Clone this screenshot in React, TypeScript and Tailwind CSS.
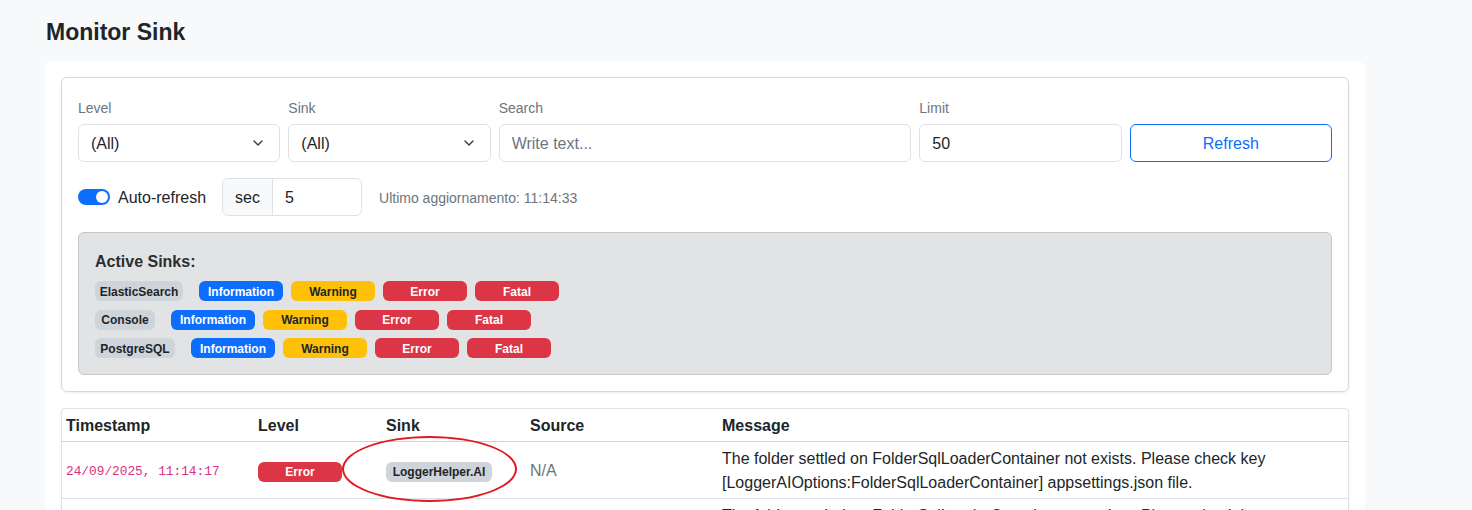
import { ChevronDown } from 'lucide-react'

type Level = 'Information' | 'Warning' | 'Error' | 'Fatal'

const levelClass: Record<Level, string> = {
  Information: 'bg-[#0d6efd] text-white',
  Warning: 'bg-[#ffc107] text-[#212529]',
  Error: 'bg-[#dc3545] text-white',
  Fatal: 'bg-[#dc3545] text-white',
}

const sinks = [
  { name: 'ElasticSearch', width: 'w-[88px]' },
  { name: 'Console', width: 'w-[60px]' },
  { name: 'PostgreSQL', width: 'w-[80px]' },
]

const levels: Level[] = ['Information', 'Warning', 'Error', 'Fatal']

const message =
  'The folder settled on FolderSqlLoaderContainer not exists. Please check key [LoggerAIOptions:FolderSqlLoaderContainer] appsettings.json file.'

function Badge({ children, className }: { children: string; className: string }) {
  return (
    <span
      className={`inline-flex h-5 items-center justify-center rounded-md pt-[1px] text-[12px] font-bold leading-none ${className}`}
    >
      {children}
    </span>
  )
}

function SelectBox({ label }: { label: string }) {
  return (
    <div className="col-span-2">
      <div className="mb-[6px] h-[22px] text-[14px] leading-[24px] text-[#6c757d]">{label}</div>
      <div className="relative">
        <select className="h-[38px] w-full appearance-none rounded-md border border-[#dee2e6] bg-white px-3 pt-[2px] text-[16px] text-[#212529] outline-none">
          <option>(All)</option>
        </select>
        <ChevronDown className="pointer-events-none absolute top-1/2 right-[14px] h-4 w-4 -translate-y-1/2 text-[#343a40]" strokeWidth={2} />
      </div>
    </div>
  )
}

function LogRow() {
  return (
    <tr className="border-b border-[#dee2e6]">
      <td className="px-1 pt-[6px] pb-[2px] align-middle font-['Liberation_Mono',monospace] text-[12.8px] text-[#d63384]">
        24/09/2025, 11:14:17
      </td>
      <td className="px-1 pt-[5px] pb-[3px] align-middle">
        <Badge className={`w-[84px] ${levelClass.Error}`}>Error</Badge>
      </td>
      <td className="px-1 pt-[5px] pb-[3px] align-middle">
        <Badge className="w-[106px] bg-[#ced4da] text-[#212529]">LoggerHelper.AI</Badge>
      </td>
      <td className="px-1 pt-[5px] pb-[3px] align-middle text-[16px] text-[#6c757d]">N/A</td>
      <td className="px-1 pt-[5px] pb-[3px] align-middle text-[16px] leading-6">{message}</td>
    </tr>
  )
}

export default function App() {
  return (
    <div className="min-h-screen bg-[#f8f9fa] font-['Liberation_Sans',Arial,sans-serif] text-[#212529]">
      <h4 className="pt-[18px] pl-[46px] text-[23px] leading-[29px] font-bold">Monitor Sink</h4>

      <div className="mt-[14px] ml-[45px] w-[1320px] rounded-lg bg-white p-4">
        <div className="rounded-md border border-[#d6d8db] px-4 pt-[18px] pb-4 shadow-[0_1px_3px_rgba(0,0,0,0.08)]">
          <div className="grid grid-cols-12 gap-2">
            <SelectBox label="Level" />
            <SelectBox label="Sink" />
            <div className="col-span-4">
              <div className="mb-[6px] h-[22px] text-[14px] leading-[24px] text-[#6c757d]">Search</div>
              <input
                placeholder="Write text..."
                className="h-[38px] w-full rounded-md border border-[#dee2e6] px-3 pt-[2px] text-[16px] outline-none placeholder:text-[#6c757d]"
              />
            </div>
            <div className="col-span-2">
              <div className="mb-[6px] h-[22px] text-[14px] leading-[24px] text-[#6c757d]">Limit</div>
              <input
                defaultValue="50"
                className="h-[38px] w-full rounded-md border border-[#dee2e6] px-3 pt-[2px] text-[16px] outline-none"
              />
            </div>
            <div className="col-span-2 flex items-end">
              <button className="h-[38px] w-full rounded-md border border-[#0d6efd] pt-[2px] text-[16px] text-[#0d6efd]">
                Refresh
              </button>
            </div>
          </div>

          <div className="mt-4 flex h-[38px] items-center">
            <span className="flex h-4 w-8 items-center justify-end rounded-full bg-[#0d6efd] px-[2px]">
              <span className="h-3 w-3 rounded-full bg-white" />
            </span>
            <span className="ml-2 pt-[1px] text-[16px]">Auto-refresh</span>
            <div className="ml-4 flex h-[38px] w-[140px] rounded-md border border-[#dee2e6]">
              <span className="flex items-center rounded-l-md border-r border-[#dee2e6] bg-[#f8f9fa] px-3 pt-[2px] text-[16px]">
                sec
              </span>
              <input defaultValue="5" className="w-full min-w-0 rounded-r-md px-3 pt-[2px] text-[16px] outline-none" />
            </div>
            <span className="ml-[17px] pt-[2px] text-[14px] text-[#6c757d]">Ultimo aggiornamento: 11:14:33</span>
          </div>

          <div className="mt-4 rounded-md border border-[#c4c8cb] bg-[#e2e3e5] p-4">
            <div className="h-6 pt-[1px] text-[16px] leading-6 font-bold text-[#2b2f32]">Active Sinks:</div>
            <div className="mt-2 flex flex-col gap-[8.5px]">
              {sinks.map((sink) => (
                <div key={sink.name} className="flex h-5 items-center gap-2">
                  <Badge className={`mr-2 ${sink.width} bg-[#ced4da] text-[#212529]`}>{sink.name}</Badge>
                  {levels.map((level) => (
                    <Badge key={level} className={`w-[84px] ${levelClass[level]}`}>
                      {level}
                    </Badge>
                  ))}
                </div>
              ))}
            </div>
          </div>
        </div>

        <div className="relative mt-4 overflow-hidden rounded-t-sm border border-[#dee2e6] shadow-[0_1px_3px_rgba(0,0,0,0.06)]">
          <table className="w-full table-fixed border-collapse text-left">
            <colgroup>
              <col className="w-[192px]" />
              <col className="w-[128px]" />
              <col className="w-[144px]" />
              <col className="w-[192px]" />
              <col />
            </colgroup>
            <thead>
              <tr className="border-b border-[#cfd2d5]">
                <th className="px-1 pt-[5px] pb-[3px] text-[16px] leading-6 font-bold">Timestamp</th>
                <th className="px-1 pt-[5px] pb-[3px] text-[16px] leading-6 font-bold">Level</th>
                <th className="px-1 pt-[5px] pb-[3px] text-[16px] leading-6 font-bold">Sink</th>
                <th className="px-1 pt-[5px] pb-[3px] text-[16px] leading-6 font-bold">Source</th>
                <th className="px-1 pt-[5px] pb-[3px] text-[16px] leading-6 font-bold">Message</th>
              </tr>
            </thead>
            <tbody>
              <LogRow />
              <LogRow />
            </tbody>
          </table>
          <div className="pointer-events-none absolute top-[27px] left-[280px] h-[66px] w-[175px] rounded-[50%] border-2 border-[#e0191f]" />
        </div>
      </div>
    </div>
  )
}
